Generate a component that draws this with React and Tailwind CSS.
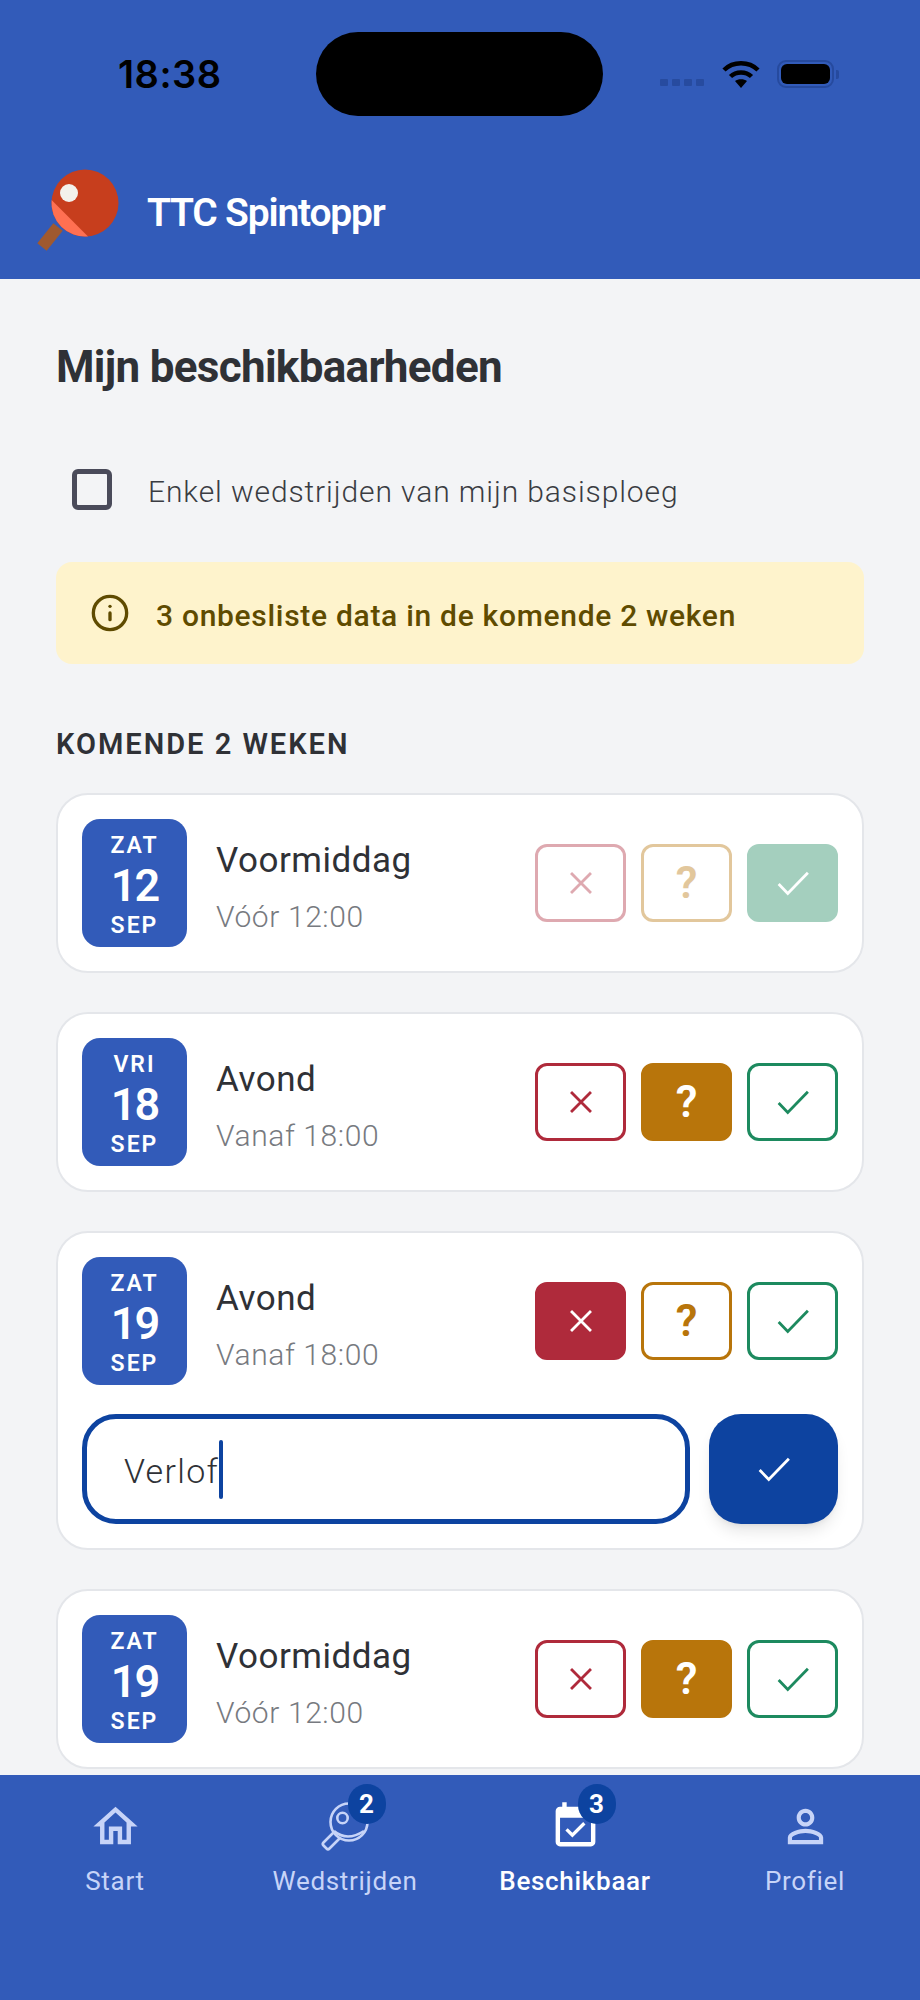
import { Info } from 'lucide-react';

const CHECK = 'M3.8 12.6 L9 18 L20.5 6.2';
const CLOSE = 'M6.3 6.3 L17.7 17.7 M17.7 6.3 L6.3 17.7';

// filled material glyphs for the bottom nav
const GlyphIcon = ({ d, className }) => (
  <svg viewBox="0 0 24 24" fill="currentColor" className={className}>
    <path d={d} />
  </svg>
);

// thin line glyphs for the choice buttons
const LineIcon = ({ d, className }) => (
  <svg viewBox="0 0 24 24" fill="none" stroke="currentColor" strokeWidth="1.6" className={className}>
    <path d={d} />
  </svg>
);

const Logo = () => (
  <svg viewBox="0 0 90 90" className="w-[90px] h-[90px] shrink-0">
    <path d="M28 62 L12 82" stroke="#A0592F" strokeWidth="12" />
    <circle cx="55" cy="38" r="33.5" fill="#C73E1D" />
    <path d="M21.6 35 L58 71.4 A33.5 33.5 0 0 1 21.6 35 Z" fill="#FF7052" />
    <circle cx="39" cy="28" r="9" fill="#F3F1EC" />
  </svg>
);

const StatusIcons = () => (
  <div className="flex items-center pl-[57px]">
    <div className="flex gap-[4px] mt-[17px]">
      <span className="w-[8px] h-[7px] bg-[#274b9f] rounded-[1px]" />
      <span className="w-[8px] h-[7px] bg-[#274b9f] rounded-[1px]" />
      <span className="w-[8px] h-[7px] bg-[#274b9f] rounded-[1px]" />
      <span className="w-[8px] h-[7px] bg-[#274b9f] rounded-[1px]" />
    </div>
    <svg viewBox="0 0 38 29" className="w-[38px] h-[29px] ml-[18px]">
      <path d="M2 10 C11 1 27 1 36 10" fill="none" stroke="#000" strokeWidth="4.5" />
      <path d="M8.5 16.5 C14 11 24 11 29.5 16.5" fill="none" stroke="#000" strokeWidth="4.5" />
      <path d="M13 21 C16 18.5 22 18.5 25 21 L19 28 Z" fill="#000" />
    </svg>
    <div className="ml-[17px] w-[57px] h-[28px] border-2 border-[#264a9e] rounded-[9px] p-[2px]">
      <div className="w-full h-full bg-black rounded-[6px]" />
    </div>
    <span className="ml-[2px] w-[3px] h-[9px] bg-[#264a9e] rounded-r-[2px]" />
  </div>
);

const DateBadge = ({ day, num, month }) => (
  <div className="w-[105px] h-[128px] shrink-0 bg-[#325bb9] rounded-[18px] flex flex-col items-center text-white pt-[13px]">
    <span className="text-[23px] leading-[28px] font-semibold tracking-[2px]">{day}</span>
    <span className="text-[45px] leading-[50px] font-semibold tracking-[-2px] mt-[1px]">{num}</span>
    <span className="text-[23px] leading-[28px] font-semibold tracking-[2px] mt-[1px]">{month}</span>
  </div>
);

const ChoiceButtons = ({ selected, dim }) => (
  <div className={`flex gap-[15px] ml-auto ${dim ? 'opacity-40' : ''}`}>
    <div className={`w-[91px] h-[78px] rounded-[12px] border-[3px] border-[#af2a3b] flex items-center justify-center ${selected === 'no' ? 'bg-[#af2a3b] text-white' : 'text-[#af2a3b]'}`}>
      <LineIcon d={CLOSE} className="w-[42px] h-[42px]" />
    </div>
    <div className={`w-[91px] h-[78px] rounded-[12px] border-[3px] border-[#b8750b] flex items-center justify-center text-[44px] leading-[44px] font-semibold ${selected === 'maybe' ? 'bg-[#b8750b] text-white' : 'text-[#b8750b]'}`}>
      ?
    </div>
    <div className={`w-[91px] h-[78px] rounded-[12px] border-[3px] border-[#1d8a5f] flex items-center justify-center ${selected === 'yes' ? 'bg-[#1d8a5f] text-white' : 'text-[#1d8a5f]'}`}>
      <LineIcon d={CHECK} className="w-[42px] h-[42px]" />
    </div>
  </div>
);

const AvailabilityCard = ({ day, num, month, title, sub, selected, dim, children }) => (
  <div className="bg-white border-2 border-[#e4e6ea] rounded-[32px] px-[24px] py-[24px] shrink-0">
    <div className="flex items-center">
      <DateBadge day={day} num={num} month={month} />
      <div className="ml-[29px] flex flex-col pt-[9px]">
        <span className="text-[35px] leading-[44px] text-[#2f3136] tracking-[0.5px]">{title}</span>
        <span className="text-[30px] leading-[38px] mt-[15px] text-[#777a80] font-light tracking-[0.6px]">{sub}</span>
      </div>
      <ChoiceButtons selected={selected} dim={dim} />
    </div>
    {children}
  </div>
);

const PaddleIcon = () => (
  <svg viewBox="0 0 53 53" fill="none" stroke="#c7d4f8" strokeWidth="2.6" className="w-[53px] h-[53px]">
    <circle cx="30" cy="22" r="18.5" />
    <circle cx="23.5" cy="18" r="5.2" />
    <path d="M15 31 Q28 42 45 31" />
    <path d="M15 32 L4.5 42.5 Q3 44 4.5 45.5 L7.5 48.5 Q9 50 10.5 48.5 L21 38" strokeLinejoin="round" />
  </svg>
);

const NavItem = ({ label, badge, active, icon }) => (
  <div className="flex-1 flex flex-col items-center">
    <div className="relative w-[53px] h-[53px]">
      {icon}
      {badge && (
        <span className="absolute -top-[16px] left-[29px] w-[38px] h-[40px] rounded-full bg-[#0d43a0] text-white text-[26px] font-bold flex items-center justify-center">
          {badge}
        </span>
      )}
    </div>
    <span className={`mt-[13px] text-[26px] leading-[30px] tracking-[0.7px] ${active ? 'text-white font-medium' : 'text-[#c7d4f8]'}`}>{label}</span>
  </div>
);

export default function App() {
  return (
    <div className="w-[920px] h-[2000px] flex flex-col overflow-hidden bg-[#f3f4f6] font-['Roboto',sans-serif]">
      <header className="h-[279px] shrink-0 bg-[#325bb9]">
        <div className="flex items-center pt-[32px]">
          <div className="w-[316px] pl-[118px] text-[38px] leading-[84px] font-semibold text-black tracking-[0.5px] font-['Inter',sans-serif]">18:38</div>
          <div className="w-[287px] h-[84px] bg-black rounded-[42px]" />
          <StatusIcons />
        </div>
        <div className="flex items-center pl-[30px] mt-[49px]">
          <Logo />
          <h1 className="ml-[27px] pt-[5px] text-[39px] leading-[48px] font-semibold text-white tracking-[-1.2px]">TTC Spintoppr</h1>
        </div>
      </header>

      <main className="flex-1 min-h-0 overflow-hidden px-[56px] flex flex-col">
        <h2 className="mt-[62px] text-[44px] leading-[52px] font-bold text-[#2f3136] tracking-[-0.7px]">Mijn beschikbaarheden</h2>

        <label className="flex items-center mt-[74px] pl-[16px]">
          <span className="w-[40px] h-[41px] border-[5px] border-[#4a4b5a] rounded-[6px]" />
          <span className="ml-[36px] pt-[5px] text-[30px] leading-[40px] font-light text-[#3a3c42] tracking-[0.9px]">Enkel wedstrijden van mijn basisploeg</span>
        </label>

        <div className="mt-[50px] h-[102px] bg-[#fef3cc] rounded-[16px] flex items-center pl-[34px] text-[#5f4b00]">
          <Info className="w-[40px] h-[40px]" strokeWidth={2} />
          <span className="ml-[26px] pt-[5px] text-[30px] leading-[36px] font-medium tracking-[0.7px]">3 onbesliste data in de komende 2 weken</span>
        </div>

        <h3 className="mt-[62px] text-[29px] leading-[36px] font-semibold text-[#2f3136] tracking-[2px]">KOMENDE 2 WEKEN</h3>

        <div className="mt-[31px] flex flex-col gap-[39px]">
          <AvailabilityCard day="ZAT" num="12" month="SEP" title="Voormiddag" sub="Vóór 12:00" selected="yes" dim />
          <AvailabilityCard day="VRI" num="18" month="SEP" title="Avond" sub="Vanaf 18:00" selected="maybe" />
          <AvailabilityCard day="ZAT" num="19" month="SEP" title="Avond" sub="Vanaf 18:00" selected="no">
            <div className="flex gap-[19px] mt-[29px]">
              <div className="flex-1 h-[110px] border-[5px] border-[#0d43a0] rounded-[34px] flex items-center pl-[37px] text-[34px] text-[#2f3136] font-light tracking-[1.3px]">
                <span className="pt-[4px]">Verlof</span>
                <span className="w-[4px] h-[59px] bg-[#0d43a0] rounded-[2px]" />
              </div>
              <div className="w-[129px] h-[110px] bg-[#0d43a0] rounded-[32px] text-white flex items-center justify-center shadow-lg">
                <LineIcon d={CHECK} className="w-[42px] h-[42px]" />
              </div>
            </div>
          </AvailabilityCard>
          <AvailabilityCard day="ZAT" num="19" month="SEP" title="Voormiddag" sub="Vóór 12:00" selected="maybe" />
        </div>
      </main>

      <nav className="h-[225px] shrink-0 bg-[#325bb9] flex pt-[25px]">
        <NavItem
          label="Start"
          icon={<GlyphIcon d="M12 5.69l5 4.5V18h-2v-6H9v6H7v-7.81l5-4.5M12 3L2 12h3v8h6v-6h2v6h6v-8h3L12 3z" className="w-[53px] h-[53px] text-[#c7d4f8]" />}
        />
        <NavItem label="Wedstrijden" badge="2" icon={<PaddleIcon />} />
        <NavItem
          label="Beschikbaar"
          badge="3"
          active
          icon={<GlyphIcon d="M16.53 11.06L15.47 10l-4.88 4.88-2.12-2.12-1.06 1.06L10.59 17l5.94-5.94zM19 3h-1V1h-2v2H8V1H6v2H5c-1.11 0-1.99.9-1.99 2L3 19c0 1.1.89 2 2 2h14c1.1 0 2-.9 2-2V5c0-1.1-.9-2-2-2zm0 16H5V8h14v11z" className="w-[53px] h-[53px] text-white" />}
        />
        <NavItem
          label="Profiel"
          icon={<GlyphIcon d="M12 5.9c1.16 0 2.1.94 2.1 2.1s-.94 2.1-2.1 2.1S9.9 9.16 9.9 8s.94-2.1 2.1-2.1m0 9c2.97 0 6.1 1.46 6.1 2.1v1.1H5.9V17c0-.64 3.13-2.1 6.1-2.1M12 4C9.79 4 8 5.79 8 8s1.79 4 4 4 4-1.79 4-4-1.79-4-4-4zm0 9c-2.67 0-8 1.34-8 4v3h16v-3c0-2.66-5.33-4-8-4z" className="w-[53px] h-[53px] text-[#c7d4f8]" />}
        />
      </nav>
    </div>
  );
}
